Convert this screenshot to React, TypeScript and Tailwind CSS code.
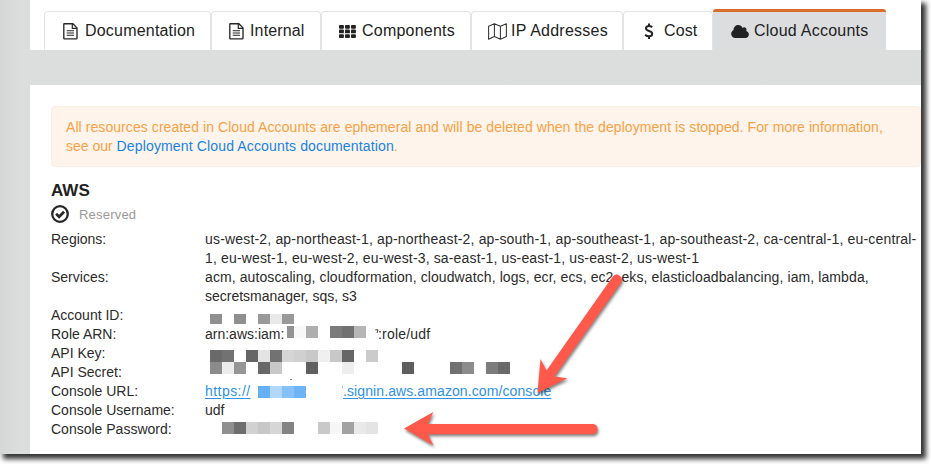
import type { ReactNode } from "react";

function DocIcon() {
  return (
    <svg className="h-[17px] w-[15px]" viewBox="0 0 15 17" fill="none" stroke="#262626">
      <path d="M.8 1.2c0-.3.2-.5.5-.5h8.6l4.1 4.2v10.4c0 .4-.2.6-.6.6H1.3c-.3 0-.5-.2-.5-.6z" strokeWidth="1.35" />
      <path d="M9.3.7v4.7H14" strokeWidth="1.2" />
      <path d="M3.7 7.7H11M3.7 10H11M3.7 12.3H11" strokeWidth="1.1" />
    </svg>
  );
}

function GridIcon() {
  return (
    <svg className="h-[13px] w-[17px]" viewBox="0 0 17 13" fill="#222">
      {[0, 4.6, 9.2].map((y) =>
        [0, 6, 12].map((x) => <rect key={`${x}-${y}`} x={x} y={y} width="4.9" height="3.7" rx="0.9" />)
      )}
    </svg>
  );
}

function MapIcon() {
  return (
    <svg className="h-[17px] w-[19px]" viewBox="0 0 19 17" fill="none" stroke="#333" strokeWidth="1.05" strokeLinejoin="round">
      <path d="M.6 3.2 6.4.8l6 2.4L18.4.8v12.8l-6 2.6-6-2.6-5.8 2.6zM6.4.8v12.8M12.4 3.2v13" />
    </svg>
  );
}

function DollarIcon() {
  return (
    <svg className="h-[17px] w-[10px]" viewBox="0 0 10 17" fill="none" stroke="#222" strokeWidth="2">
      <path d="M8.2 4.3C7.2 3.5 6.2 3.1 4.900 3.1c-1.700 0-2.900.8-2.900 2.200 0 3.400 6.200 2 6.200 5.400 0 1.600-1.400 2.600-3.200 2.600-1.500 0-2.800-.6-3.900-1.600M5 .6v2.600M5 13.200v2.900" />
    </svg>
  );
}

function CloudIcon() {
  return (
    <svg className="h-[13px] w-[18px]" viewBox="0 0 1920 1408" fill="#222">
      <path d="M1920 1024q0 159-112.500 271.500T1536 1408H448q-185 0-316.500-131.500T0 960q0-132 71-241.500T258 555q-2-28-2-43 0-212 150-362T768 0q158 0 286.500 88T1241 318q70-62 167-62 106 0 181 75t75 181q0 75-41 138 129 30 213 134.500t84 239.500z" />
    </svg>
  );
}

function ReservedIcon() {
  return (
    <svg className="h-[18px] w-[18px]" viewBox="0 0 18 18" fill="none" stroke="#282828">
      <circle cx="9" cy="9" r="7.800" strokeWidth="2.300" />
      <path d="m5.100 8.800 3 3 5-5" strokeWidth="2.700" />
    </svg>
  );
}

interface TabProps {
  icon: ReactNode;
  label: string;
  width: string;
  gap: string;
  pad: string;
  tracking?: string;
  active?: boolean;
}

function Tab({ icon, label, width, gap, pad, tracking = "", active = false }: TabProps) {
  const look = active
    ? "h-[41px] border-t-[3px] border-t-[#d86e2a] bg-[#dcddde] rounded-t-[3px]"
    : "h-[39px] border border-b-0 border-[#e4e4e4] rounded-t-[4px] bg-white";
  return (
    <div className={`flex shrink-0 items-center text-[16px] text-[#222] ${look} ${width} ${gap} ${pad} ${tracking}`}>
      {icon}
      <span className="whitespace-nowrap">{label}</span>
    </div>
  );
}

/* Each cell is [width, colour]; an empty colour leaves a gap. */
type Cell = [number, string];

function Mosaic({ cells, className }: { cells: Cell[]; className: string }) {
  return (
    <span className={`absolute flex ${className}`}>
      {cells.map(([w, c], i) => (
        <span key={i} className="h-full" style={{ width: w, backgroundColor: c || undefined }} />
      ))}
    </span>
  );
}

const accountCells: Cell[] = [[12, "#909090"], [12, ""], [12, "#909090"], [12, ""], [12, "#999"], [12, "#e9e9e9"], [12, "#999"]];
const roleCells: Cell[] = [[7, "#929292"], [12, "#f8f8f8"], [12, "#afafaf"], [12, ""], [12, "#7b7b7b"], [12, "#717171"], [12, "#b6b6b6"]];
const keyCells: Cell[] = [
  [12, "#6a6a6a"], [12, "#727272"], [12, ""], [12, "#656565"], [12, "#e4e4e4"], [12, "#727272"], [12, "#d5d5d5"],
  [12, "#d0d0d0"], [12, "#c8c8c8"], [12, "#f0f0f0"], [12, "#c8c8c8"], [12, "#666"], [12, ""], [12, "#cbcbcb"],
];
const secretCells: Cell[] = [
  [12, "#8b8b8b"], [12, "#ececec"], [12, "#969696"], [12, ""], [12, "#686868"], [12, "#c8c8c8"], [24, ""],
  [12, "#606060"], [24, ""], [12, "#eee"], [48, ""], [12, "#5e5e5e"], [36, ""], [12, "#707070"], [12, "#8c8c8c"],
  [12, ""], [12, "#7c7c7c"], [12, "#6a6a6a"],
];
const urlCells: Cell[] = [[12, "#65b0f3"], [12, "#b2d8f9"], [12, "#85c1f6"], [12, "#6db5f4"]];
const passwordCells: Cell[] = [
  [12, "#8f8f8f"], [12, "#6e6e6e"], [12, "#d1d1d1"], [12, "#c7c7c7"], [12, "#d6d6d6"], [12, "#838383"], [24, ""],
  [12, "#c9c9c9"], [12, "#f6f6f6"], [12, "#a2a2a2"], [12, "#e9e9e9"], [12, "#e4e4e4"],
];

function Row({ label, children, lines = "h-[19px]" }: { label: string; children?: ReactNode; lines?: string }) {
  return (
    <div className={`flex ${lines}`}>
      <dt className="w-[154px] shrink-0">{label}</dt>
      <dd className="relative whitespace-nowrap">{children}</dd>
    </div>
  );
}

function Arrows() {
  return (
    <svg
      className="pointer-events-none absolute top-0 left-0 h-[454px] w-[921px] drop-shadow-[1px_2px_1.5px_rgba(0,0,0,0.5)]"
      viewBox="0 0 921 454"
      fill="#ff594b"
    >
      <path d="M537.500 393 540.500 359 546.500 370.500 612.800 276.500A5.200 5.200 0 0 1 621.200 282.500L554.500 376.500 567.500 378.300Z" />
      <path d="M404 428.500 433.300 412 428 424H593A5.200 5.200 0 0 1 593 434.300H428L433.300 445.500Z" />
    </svg>
  );
}

export default function App() {
  return (
    <div className="h-[464px] w-[931px] overflow-hidden bg-white font-['Liberation_Sans',Arial,sans-serif]">
      <div className="relative h-[454px] w-[921px] bg-[#dcdedd] shadow-[4px_4px_5px_1px_rgba(0,0,0,0.8)]">
        <div className="flex h-full bg-linear-to-r from-[#d5d7d6] to-[#dcdedd] to-[20px] pl-[30px]">
          <div className="w-[891px] overflow-hidden">
            <nav className="flex h-[50px] items-end bg-white pl-[14px]">
              <Tab icon={<DocIcon />} label="Documentation" width="w-[167px]" gap="gap-[7px]" pad="pl-[18px]" tracking="tracking-[0.2px]" />
              <Tab icon={<DocIcon />} label="Internal" width="w-[110px]" gap="gap-[6px]" pad="pl-[17px]" tracking="tracking-[0.15px]" />
              <Tab icon={<GridIcon />} label="Components" width="w-[150px]" gap="gap-[6px]" pad="pl-[17px]" tracking="tracking-[0.22px]" />
              <Tab icon={<MapIcon />} label="IP Addresses" width="w-[152px]" gap="gap-[4px]" pad="pl-[16px]" tracking="tracking-[0.25px]" />
              <Tab icon={<DollarIcon />} label="Cost" width="w-[90px]" gap="gap-[10px]" pad="pl-[20px]" tracking="tracking-[0.1px]" />
              <Tab icon={<CloudIcon />} label="Cloud Accounts" width="w-[173px]" gap="gap-[5px]" pad="pl-[18px]" tracking="tracking-[0.24px]" active />
            </nav>
            <main className="mt-[35px] h-[369px] bg-white pt-[21px] pl-[21px] text-[14px] leading-[19px] text-[#2b2b2b]">
              <div className="h-[61px] w-[870px] rounded-[4px] border border-[#fcefe0] bg-[#fef4eb] pt-[11px] pl-[14px] whitespace-nowrap text-[#f7a145]">
                <p className="tracking-[0.072px]">All resources created in Cloud Accounts are ephemeral and will be deleted when the deployment is stopped. For more information,</p>
                <p>
                  see our <a className="tracking-[0.145px] text-[#1583e3]">Deployment Cloud Accounts documentation</a>.
                </p>
              </div>
              <h2 className="mt-[14px] h-[20px] text-[17px] leading-[20px] font-bold text-[#222]">AWS</h2>
              <div className="mt-[4px] flex h-[18px] items-center gap-[10px] text-[13px] tracking-[0.2px] text-[#999]">
                <ReservedIcon />
                <span>Reserved</span>
              </div>
              <dl className="mt-[7px]">
                <Row label="Regions:" lines="h-[38px]">
                  <p className="tracking-[0.175px]">us-west-2, ap-northeast-1, ap-northeast-2, ap-south-1, ap-southeast-1, ap-southeast-2, ca-central-1, eu-central-</p>
                  <p className="tracking-[0.15px]">1, eu-west-1, eu-west-2, eu-west-3, sa-east-1, us-east-1, us-east-2, us-west-1</p>
                </Row>
                <Row label="Services:" lines="h-[38px]">
                  <p className="tracking-[0.095px]">acm, autoscaling, cloudformation, cloudwatch, logs, ecr, ecs, ec2, eks, elasticloadbalancing, iam, lambda,</p>
                  <p>secretsmanager, sqs, s3</p>
                </Row>
                <Row label="Account ID:">
                  <Mosaic cells={accountCells} className="top-[8px] left-[5px] h-[10px]" />
                </Row>
                <Row label="Role ARN:">
                  <span className="inline-block w-[173px]">arn:aws:iam:</span>
                  <span className="tracking-[0.2px]">:role/udf</span>
                  <Mosaic cells={roleCells} className="top-[1px] left-[82px] h-[12px]" />
                  <svg className="absolute top-[4px] left-[170px] h-[5px] w-[4px]" viewBox="0 0 4 5" fill="none" stroke="#444">
                    <path d="M.3.8H3L2 4" />
                  </svg>
                </Row>
                <Row label="API Key:">
                  <Mosaic cells={keyCells} className="top-[6px] left-[5px] h-[12px]" />
                </Row>
                <Row label="API Secret:">
                  <Mosaic cells={secretCells} className="top-[-1px] left-[5px] h-[12px]" />
                  <span className="absolute top-[16px] left-[85px] h-px w-[2px] bg-[#888]" />
                </Row>
                <Row label="Console URL:">
                  <span className="inline-block w-[138px] text-[#2f91e5]">
                    <a className="tracking-[0.45px] underline underline-offset-2">https://</a>
                  </span>
                  <a className="tracking-[0.1px] text-[#2f91e5] underline underline-offset-2">.signin.aws.amazon.com/console</a>
                  <Mosaic cells={urlCells} className="top-[4px] left-[53px] h-[12px]" />
                  <span className="absolute top-[4px] left-[137px] h-[2px] w-px bg-[#8cc2f2]" />
                </Row>
                <Row label="Console Username:">udf</Row>
                <Row label="Console Password:">
                  <Mosaic cells={passwordCells} className="top-[2px] left-[17px] h-[12px]" />
                </Row>
              </dl>
            </main>
          </div>
        </div>
        <Arrows />
      </div>
    </div>
  );
}
